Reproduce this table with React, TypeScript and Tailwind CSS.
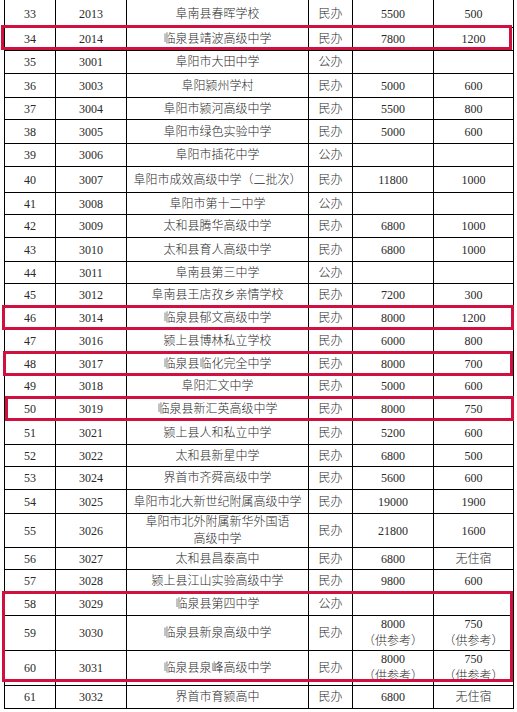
import React from "react";

type Row = {
  n: string;
  code: string;
  name: React.ReactNode;
  kind: string;
  fee: React.ReactNode;
  stay: React.ReactNode;
  h: string;
};

const ref = (v: string) => (
  <span className="flex flex-col items-center leading-[17px]">
    <span>{v}</span>
    <span>（供参考）</span>
  </span>
);

const rows: Row[] = [
  { n: "33", code: "2013", name: "阜南县春晖学校", kind: "民办", fee: "5500", stay: "500", h: "h-[28px]" },
  { n: "34", code: "2014", name: "临泉县靖波高级中学", kind: "民办", fee: "7800", stay: "1200", h: "h-[23px]" },
  { n: "35", code: "3001", name: "阜阳市大田中学", kind: "公办", fee: "", stay: "", h: "h-[23px]" },
  { n: "36", code: "3003", name: "阜阳颍州学村", kind: "民办", fee: "5000", stay: "600", h: "h-[24px]" },
  { n: "37", code: "3004", name: "阜阳市颍河高级中学", kind: "民办", fee: "5500", stay: "800", h: "h-[22px]" },
  { n: "38", code: "3005", name: "阜阳市绿色实验中学", kind: "民办", fee: "5000", stay: "600", h: "h-[24px]" },
  { n: "39", code: "3006", name: "阜阳市插花中学", kind: "公办", fee: "", stay: "", h: "h-[23px]" },
  { n: "40", code: "3007", name: "阜阳市成效高级中学（二批次）", kind: "民办", fee: "11800", stay: "1000", h: "h-[26px]" },
  { n: "41", code: "3008", name: "阜阳市第十二中学", kind: "公办", fee: "", stay: "", h: "h-[22px]" },
  { n: "42", code: "3009", name: "太和县腾华高级中学", kind: "民办", fee: "6800", stay: "1000", h: "h-[23px]" },
  { n: "43", code: "3010", name: "太和县育人高级中学", kind: "民办", fee: "6800", stay: "1000", h: "h-[24px]" },
  { n: "44", code: "3011", name: "阜南县第三中学", kind: "公办", fee: "", stay: "", h: "h-[22px]" },
  { n: "45", code: "3012", name: "阜南县王店孜乡亲情学校", kind: "民办", fee: "7200", stay: "300", h: "h-[23px]" },
  { n: "46", code: "3014", name: "临泉县郁文高级中学", kind: "民办", fee: "8000", stay: "1200", h: "h-[23px]" },
  { n: "47", code: "3016", name: "颍上县博林私立学校", kind: "民办", fee: "6000", stay: "800", h: "h-[23px]" },
  { n: "48", code: "3017", name: "临泉县临化完全中学", kind: "民办", fee: "8000", stay: "700", h: "h-[22px]" },
  { n: "49", code: "3018", name: "阜阳汇文中学", kind: "民办", fee: "5000", stay: "600", h: "h-[23px]" },
  { n: "50", code: "3019", name: "临泉县新汇英高级中学", kind: "民办", fee: "8000", stay: "750", h: "h-[23px]" },
  { n: "51", code: "3021", name: "颍上县人和私立中学", kind: "民办", fee: "5200", stay: "600", h: "h-[24px]" },
  { n: "52", code: "3022", name: "太和县新星中学", kind: "民办", fee: "6800", stay: "500", h: "h-[22px]" },
  { n: "53", code: "3024", name: "界首市齐舜高级中学", kind: "民办", fee: "5600", stay: "600", h: "h-[23px]" },
  { n: "54", code: "3025", name: "阜阳市北大新世纪附属高级中学", kind: "民办", fee: "19000", stay: "1900", h: "h-[24px]" },
  {
    n: "55",
    code: "3026",
    name: (
      <span className="flex flex-col items-center leading-[17px]">
        <span>阜阳市北外附属新华外国语</span>
        <span>高级中学</span>
      </span>
    ),
    kind: "民办",
    fee: "21800",
    stay: "1600",
    h: "h-[34px]",
  },
  { n: "56", code: "3027", name: "太和县昌泰高中", kind: "民办", fee: "6800", stay: "无住宿", h: "h-[22px]" },
  { n: "57", code: "3028", name: "颍上县江山实验高级中学", kind: "民办", fee: "9800", stay: "600", h: "h-[23px]" },
  { n: "58", code: "3029", name: "临泉县第四中学", kind: "公办", fee: "", stay: "", h: "h-[23px]" },
  { n: "59", code: "3030", name: "临泉县新泉高级中学", kind: "民办", fee: ref("8000"), stay: ref("750"), h: "h-[35px]" },
  { n: "60", code: "3031", name: "临泉县泉峰高级中学", kind: "民办", fee: ref("8000"), stay: ref("750"), h: "h-[35px]" },
  { n: "61", code: "3032", name: "界首市育颍高中", kind: "民办", fee: "6800", stay: "无住宿", h: "h-[23px]" },
];

const cell = "flex items-center justify-center border-r border-black text-center";

export default function App() {
  return (
    <div
      lang="zh-CN"
      className="relative w-[517px] h-[712px] overflow-hidden bg-white text-[12px] leading-none font-light text-[#2a2a2a]"
      style={{ fontFamily: '"Liberation Serif", "Noto Sans CJK SC", serif' }}
    >
      <div className="ml-[4px] w-[510px] border-l border-black">
        {rows.map((r) => (
          <div
            key={r.n}
            className={`grid grid-cols-[51px_71px_182px_44px_81px_80px] border-b border-black ${r.h}`}
          >
            <div className={cell}>{r.n}</div>
            <div className={cell}>{r.code}</div>
            <div className={cell}>{r.name}</div>
            <div className={cell}>{r.kind}</div>
            <div className={cell}>{r.fee}</div>
            <div className={cell}>{r.stay}</div>
          </div>
        ))}
      </div>

      <div className="absolute left-[1px] top-[25px] w-[511px] h-[25px] border-[3px] border-[#d0103f]" />
      <div className="absolute left-[2px] top-[305px] w-[512px] h-[25px] border-[3px] border-[#d0103f]" />
      <div className="absolute left-[3px] top-[351px] w-[510px] h-[25px] border-[3px] border-[#d0103f]" />
      <div className="absolute left-[5px] top-[396px] w-[509px] h-[25px] border-[3px] border-[#d0103f]" />
      <div className="absolute left-[2px] top-[591px] w-[511px] h-[91px] border-[3px] border-[#d0103f]" />
    </div>
  );
}
